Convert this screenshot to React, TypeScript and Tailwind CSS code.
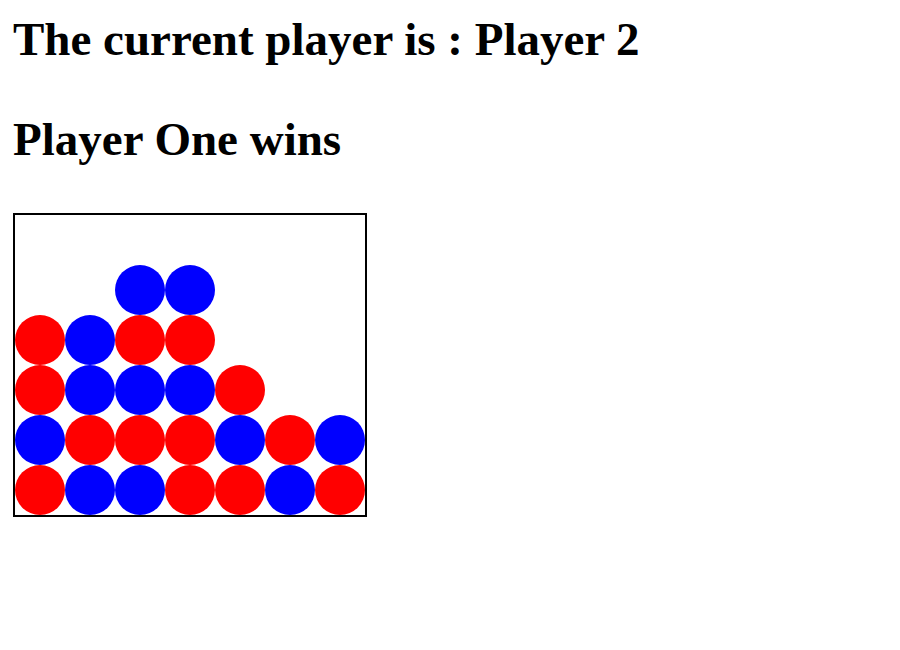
const board: string[] = [
  '.......',
  '..BB...',
  'RBRR...',
  'RBBBR..',
  'BRRRBRB',
  'RBBRRBR',
]

function Cell({ v }: { v: string }) {
  if (v === 'R') return <div className="w-[50px] h-[50px] rounded-full bg-[#ff0000]" />
  if (v === 'B') return <div className="w-[50px] h-[50px] rounded-full bg-[#0000ff]" />
  return <div className="w-[50px] h-[50px]" />
}

export default function App() {
  return (
    <div className="min-h-screen bg-white text-black pl-[13px] pt-[13px] font-['Liberation_Serif',serif]">
      <h1 className="text-[47px] leading-[53px] font-bold">The current player is : Player 2</h1>
      <h1 className="text-[47px] leading-[53px] font-bold mt-[47px]">Player One wins</h1>

      {/* Board */}
      <div className="mt-[47px] w-[354px] border-2 border-black grid grid-cols-7">
        {board.map((row, r) =>
          row.split('').map((v, c) => <Cell key={`${r}-${c}`} v={v} />)
        )}
      </div>
    </div>
  )
}
